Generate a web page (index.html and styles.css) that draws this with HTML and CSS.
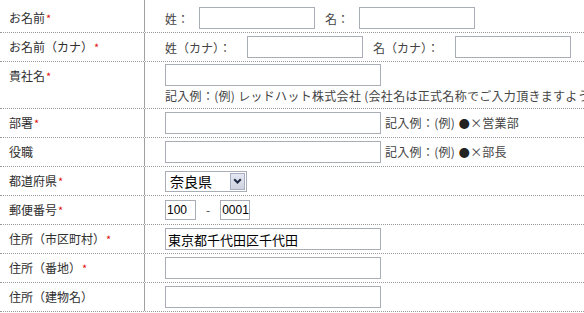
FILE: index.html
```html
<!DOCTYPE html>
<html lang="ja">
<head>
<meta charset="utf-8">
<title>お問い合わせフォーム</title>
<link rel="stylesheet" href="styles.css">
</head>
<body>
<div class="form">
  <div class="row first">
    <div class="label">お名前<span class="req">*</span></div>
    <div class="field">
      <span class="cap cap-s">姓：</span><input class="name" type="text">
      <span class="cap cap-s">名：</span><input class="name" type="text">
    </div>
  </div>
  <div class="row">
    <div class="label">お名前（カナ）<span class="req">*</span></div>
    <div class="field">
      <span class="cap cap-l">姓（カナ）：</span><input class="name" type="text">
      <span class="cap cap-l">名（カナ）：</span><input class="name" type="text">
    </div>
  </div>
  <div class="row">
    <div class="label">貴社名<span class="req">*</span></div>
    <div class="field stack">
      <input class="wide" type="text">
      <span class="hint">記入例：(例) レッドハット株式会社 (会社名は正式名称でご入力頂きますようお願いいたします。)</span>
    </div>
  </div>
  <div class="row">
    <div class="label">部署<span class="req">*</span></div>
    <div class="field tight">
      <input class="wide" type="text"><span class="hint">記入例：(例) <span class="fw dot">●</span><span class="fw">×</span>営業部</span>
    </div>
  </div>
  <div class="row">
    <div class="label">役職</div>
    <div class="field tight">
      <input class="wide" type="text"><span class="hint">記入例：(例) <span class="fw dot">●</span><span class="fw">×</span>部長</span>
    </div>
  </div>
  <div class="row">
    <div class="label">都道府県<span class="req">*</span></div>
    <div class="field">
      <div class="select">
        <span class="select-value">奈良県</span>
        <span class="select-btn">
          <svg width="9" height="6" viewBox="0 0 9 6"><path d="M1.2 1.2 L4.5 4.5 L7.8 1.2" fill="none" stroke="#1f2a44" stroke-width="2"/></svg>
        </span>
      </div>
    </div>
  </div>
  <div class="row">
    <div class="label">郵便番号<span class="req">*</span></div>
    <div class="field">
      <input class="zip3" type="text" value="100"><span class="dash">-</span><input class="zip4" type="text" value="0001">
    </div>
  </div>
  <div class="row">
    <div class="label">住所（市区町村）<span class="req">*</span></div>
    <div class="field">
      <input class="wide" type="text" value="東京都千代田区千代田">
    </div>
  </div>
  <div class="row">
    <div class="label">住所（番地）<span class="req">*</span></div>
    <div class="field">
      <input class="wide" type="text">
    </div>
  </div>
  <div class="row">
    <div class="label">住所（建物名）</div>
    <div class="field">
      <input class="wide" type="text">
    </div>
  </div>
</div>
</body>
</html>
```

FILE: styles.css
```css
* {
  box-sizing: border-box;
}

html, body {
  margin: 0;
  padding: 0;
  background: #ffffff;
}

body {
  width: 584px;
  height: 313px;
  overflow: hidden;
  font-family: "Noto Sans CJK JP", "Noto Sans", sans-serif;
  font-size: 12px;
  color: #2f2f2f;
}

.form {
  width: 760px;
}

.row {
  display: flex;
  border-bottom: 1px dotted #9a9a9a;
}

.label {
  flex: none;
  width: 145px;
  padding-left: 9px;
  line-height: 28px;
  border-right: 1px solid #a0a0a0;
  white-space: nowrap;
}

.req {
  color: #e01010;
  font-size: 11px;
  margin-left: 1px;
}

.field {
  flex: 1;
  display: flex;
  align-items: center;
  gap: 10px;
  min-height: 28px;
  padding-left: 20px;
  white-space: nowrap;
  color: #444444;
}

.first .label {
  padding-top: 4px;
}

.first .field {
  min-height: 32px;
  padding-top: 4px;
}

.cap {
  flex: none;
}

.cap-s {
  width: 24px;
}

.cap-l {
  width: 72px;
}

.field.tight {
  gap: 4px;
}

.field.stack {
  flex-direction: column;
  align-items: flex-start;
  gap: 1px;
  padding-top: 2px;
  padding-bottom: 3px;
}

.hint {
  line-height: 18px;
  letter-spacing: 0.3px;
  color: #444444;
}

.fw {
  display: inline-block;
  width: 12px;
  text-align: center;
  letter-spacing: 0;
}

.dot {
  font-size: 11px;
  color: #222222;
}

input {
  height: 22px;
  margin: 0;
  padding: 0 2px;
  border: 1px solid #a9aeb6;
  background: #ffffff;
  font-family: "Noto Sans CJK JP", sans-serif;
  font-size: 13px;
  color: #000000;
  outline: none;
}

.name {
  width: 116px;
}

.wide {
  width: 216px;
}

.zip3,
.zip4 {
  height: 20px;
  padding: 0 0 0 1px;
  font-family: "Liberation Sans", "Noto Sans", sans-serif;
  font-size: 12px;
}

.zip3 {
  width: 31px;
}

.zip4 {
  width: 30px;
}

.dash {
  color: #444444;
  line-height: 1;
}

.select {
  display: flex;
  align-items: center;
  width: 82px;
  height: 21px;
  padding: 1px;
  border: 1px solid #a9aeb6;
  background: #ffffff;
}

.select-value {
  flex: 1;
  padding-left: 3px;
  font-size: 14px;
  line-height: 17px;
  color: #000000;
}

.select-btn {
  display: flex;
  align-items: center;
  justify-content: center;
  width: 15px;
  height: 17px;
  border: 1px solid #a8afc4;
  background: linear-gradient(#e4e7f0, #cfd3e0);
}
```
